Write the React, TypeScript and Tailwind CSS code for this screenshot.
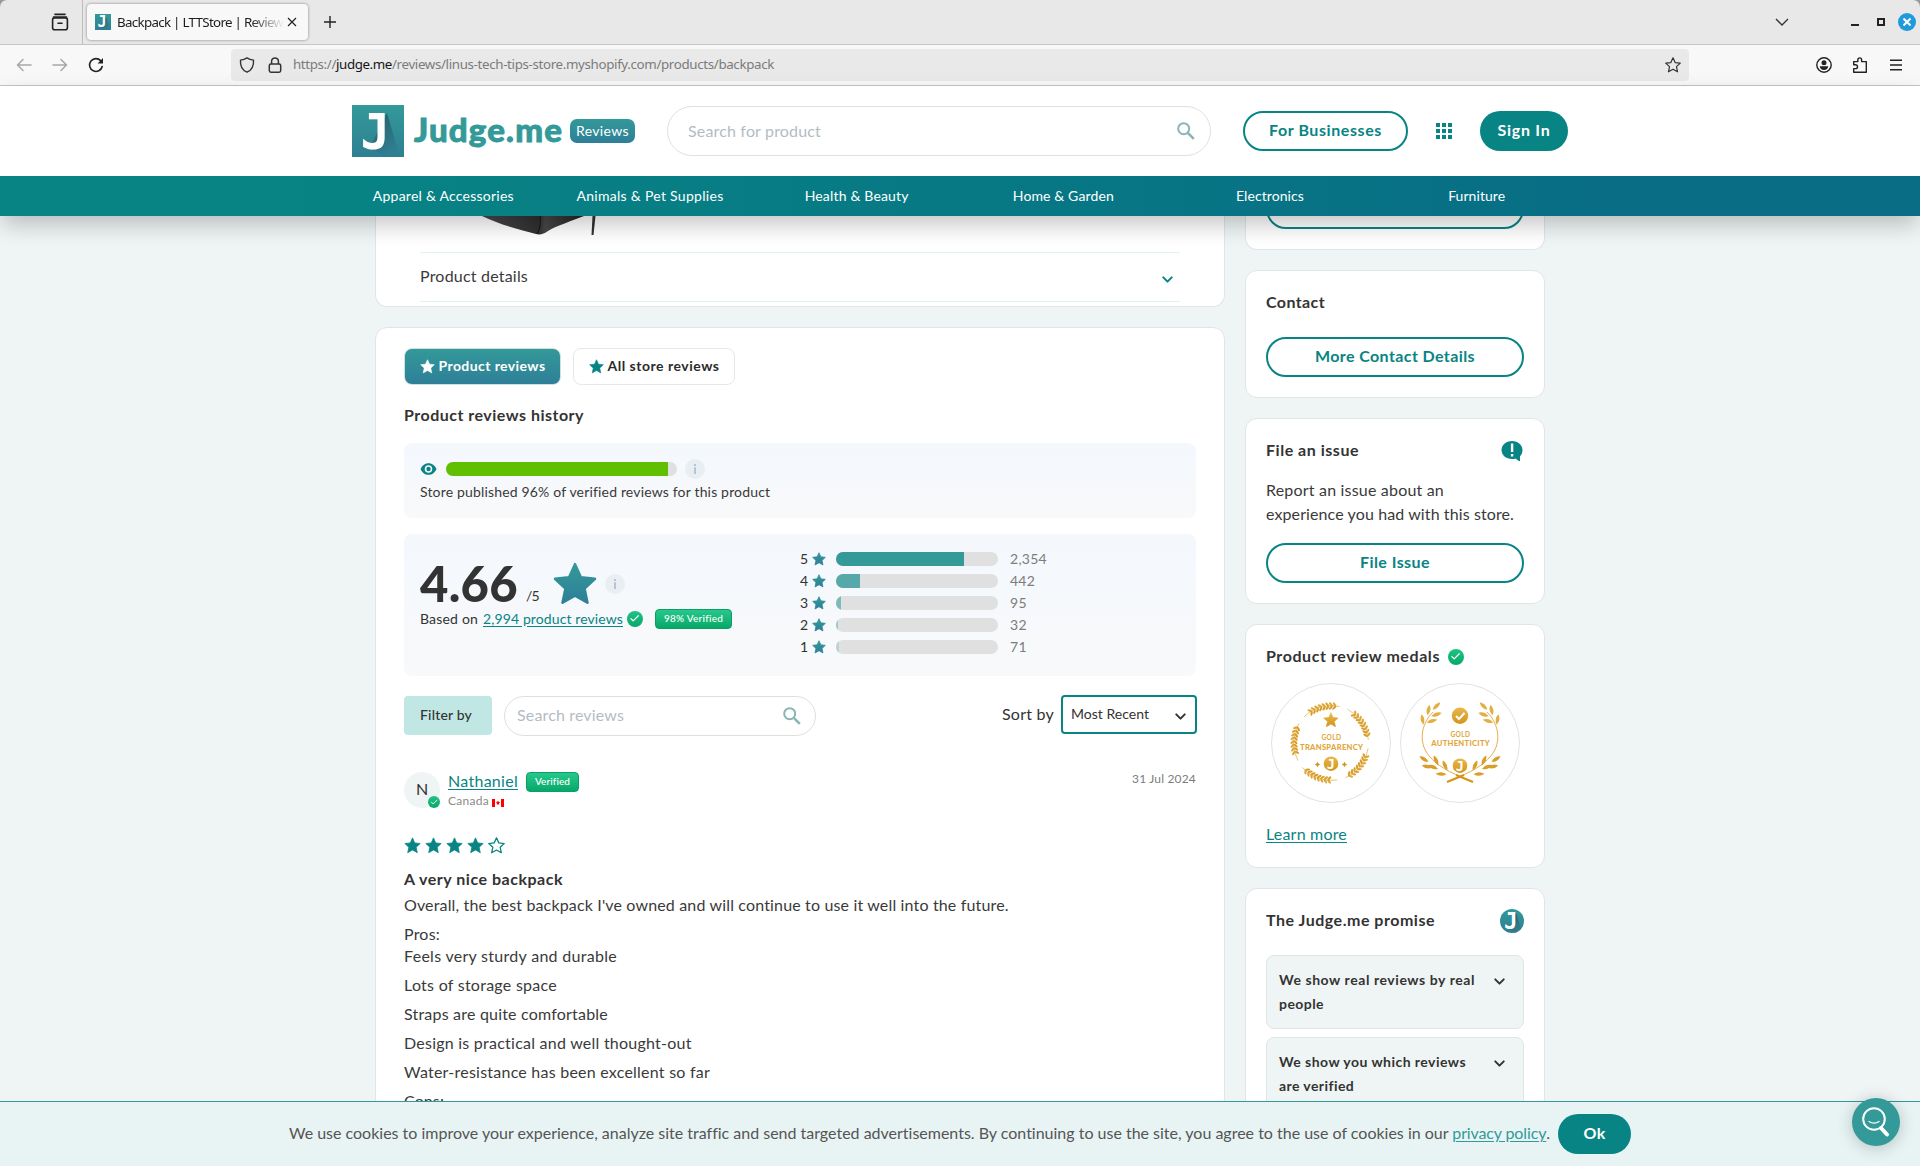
import React, { useLayoutEffect, useRef, useState } from "react";
import { ChevronDown, Check } from "lucide-react";

/* Text whose tracking is computed so that the run occupies `w` pixels. */
function Fit({ w, children, className = "" }: { w: number; children: string; className?: string }) {
  const ref = useRef<HTMLSpanElement>(null);
  const [tracking, setTracking] = useState(0);
  useLayoutEffect(() => {
    const el = ref.current;
    if (!el) return;
    const prev = el.style.letterSpacing;
    el.style.letterSpacing = "0px";
    const natural = el.getBoundingClientRect().width;
    el.style.letterSpacing = prev;
    setTracking((w - natural) / children.length);
  }, [w, children]);
  return (
    <span ref={ref} className={"inline-block -translate-y-px whitespace-pre " + className} style={{ letterSpacing: tracking + "px" }}>
      {children}
    </span>
  );
}

const STAR = "M12 1.2l3.2 7.1 7.7.9-5.7 5.3 1.6 7.7L12 18.3l-6.8 3.9 1.6-7.7L1.1 9.2l7.7-.9z";

function Star({ className, outline }: { className: string; outline?: boolean }) {
  return (
    <svg viewBox="0 0 24 24" className={className}>
      <path d={STAR} fill={outline ? "none" : "currentColor"} stroke="currentColor" strokeWidth={outline ? 1.8 : 1} strokeLinejoin="round" />
    </svg>
  );
}

function GradStar({ className }: { className: string }) {
  return (
    <svg viewBox="0 0 24 24" className={className}>
      <defs>
        <linearGradient id="gs" x1="0" y1="0" x2="0" y2="1">
          <stop offset="0" stopColor="#339999" />
          <stop offset="1" stopColor="#2e7f98" />
        </linearGradient>
      </defs>
      <path d={STAR} fill="url(#gs)" stroke="url(#gs)" strokeWidth="1.4" strokeLinejoin="round" />
    </svg>
  );
}

function JLogo({ className, round }: { className: string; round?: boolean }) {
  return (
    <svg viewBox="0 0 52 52" className={className}>
      <defs>
        <linearGradient id="jl" x1="0" y1="0" x2="0" y2="1">
          <stop offset="0" stopColor="#339999" />
          <stop offset="1" stopColor="#2e7f93" />
        </linearGradient>
        <linearGradient id="js" x1="0" y1="0" x2="0.5" y2="1">
          <stop offset="0.1" stopColor="#2c5f66" />
          <stop offset="1" stopColor="#2e7f93" />
        </linearGradient>
        <clipPath id="jc">
          <circle cx="26" cy="26" r="26" />
        </clipPath>
      </defs>
      <g clipPath={round ? "url(#jc)" : undefined}>
        <rect width="52" height="52" fill="url(#jl)" />
        <path d="M35 8 L48 52 H32 L18 42 Z" fill="url(#js)" />
        <text x="8.500" y="43.500" fontFamily="DejaVu Sans Mono" fontWeight="700" fontSize="49" fill="#fff">J</text>
      </g>
    </svg>
  );
}

function CheckDisc({ className }: { className: string }) {
  return (
    <span className={"flex shrink-0 items-center justify-center rounded-full bg-linear-to-b from-[#1fc286] to-[#07a86b] text-white " + className}>
      <Check className="size-[70%]" strokeWidth={2.6} />
    </span>
  );
}

function Info() {
  return (
    <span className="flex size-5 items-center justify-center rounded-full bg-[#e9eef3]">
      <svg viewBox="0 0 20 20" className="size-5">
        <path d="M9 5h2v1.9H9zM9 8.2h2V15H9z" fill="#b5c5d6" />
      </svg>
    </span>
  );
}

function Search({ className }: { className: string }) {
  return (
    <svg viewBox="0 0 18 18" className={className} fill="none" stroke="#8bb5b5">
      <circle cx="6.7" cy="6.7" r="5.5" strokeWidth="2" />
      <path d="M10.8 10.8l6 6" strokeWidth="2.6" />
    </svg>
  );
}

function Badge({ w, tw, children }: { w: string; tw: number; children: string }) {
  return (
    <span className={"flex h-5 items-center justify-center rounded border border-[#0a9f66] bg-linear-to-b from-[#25c88b] to-[#05a869] text-[10px] font-medium leading-none text-white " + w}>
      <Fit w={tw}>{children}</Fit>
    </span>
  );
}

/* ---------------- Browser chrome ---------------- */

function Chrome() {
  return (
    <div className="shrink-0 bg-[#9a9a9a] font-['Noto_Sans'] text-[13.33px] text-[#1c1c1e]">
      <div className="flex h-[45px] items-center rounded-t-[7px] border-b border-[#c4c4c4] bg-[#e8e8e8]">
        <div className="flex h-full w-[83px] shrink-0 items-center border-r border-[#bcbcbc] pl-[51px]">
          <svg viewBox="0 0 18 18" className="size-[18px]" fill="none" stroke="#222" strokeWidth="1.6" strokeLinecap="round">
            <path d="M4 1.4h10M7 10.2h4" />
            <path d="M2.5 4h13" />
            <rect x="1.6" y="4.9" width="14.8" height="11.8" rx="2" />
          </svg>
        </div>
        <div className="ml-1 flex h-[36px] w-[221px] shrink-0 items-center rounded bg-[#f8f8f8] pl-2 shadow-[0_0_3px_rgba(0,0,0,0.45)]">
          <JLogo className="size-4 shrink-0" />
          <div className="ml-1.5 w-[167px] overflow-hidden whitespace-nowrap [mask-image:linear-gradient(to_right,black_80%,transparent)]">
            <Fit w={172} className="translate-y-px">Backpack | LTTStore | Reviews</Fit>
          </div>
          <svg viewBox="0 0 10 10" className="ml-[3px] size-[10px]" stroke="#222" strokeWidth="1.2">
            <path d="M1 1l8 8M9 1L1 9" />
          </svg>
        </div>
        <svg viewBox="0 0 12 12" className="ml-4 size-3" stroke="#222" strokeWidth="1.4">
          <path d="M6 0v12M0 6h12" />
        </svg>
        <div className="flex-1" />
        <svg viewBox="0 0 14 8" className="mr-[62px] h-2 w-[14px]" fill="none" stroke="#333" strokeWidth="1.4">
          <path d="M1 1l6 6 6-6" />
        </svg>
        <div className="mt-1.5 h-[2px] w-2 bg-[#222]" />
        <div className="ml-[18px] size-2 border-2 border-[#222]" />
        <div className="ml-[13px] mr-1 flex size-[18px] items-center justify-center rounded-full bg-[#1f9bdc]">
          <svg viewBox="0 0 8 8" className="size-2" stroke="#fff" strokeWidth="2">
            <path d="M0.5 0.5l7 7M7.5 0.5l-7 7" />
          </svg>
        </div>
      </div>
      <div className="flex h-[41px] items-center border-b border-[#c4c4c4] bg-[#f8f8f8]">
        <svg viewBox="0 0 16 14" className="ml-4 h-[14px] w-4" fill="none" stroke="#a6a6a6" strokeWidth="1.5" strokeLinecap="round" strokeLinejoin="round">
          <path d="M15 7H1.5M7 1.5L1.5 7 7 12.5" />
        </svg>
        <svg viewBox="0 0 16 14" className="ml-5 h-[14px] w-4" fill="none" stroke="#a6a6a6" strokeWidth="1.5" strokeLinecap="round" strokeLinejoin="round">
          <path d="M1 7h13.5M9 1.5L14.5 7 9 12.5" />
        </svg>
        <svg viewBox="0 0 16 16" className="ml-5 size-4" fill="none" stroke="#222" strokeWidth="1.6" strokeLinecap="round">
          <path d="M14.2 9.5A6.4 6.4 0 1 1 12.6 3.6" />
          <path d="M15 1v5.4H9.6z" fill="#222" stroke="none" />
        </svg>
        <div className="ml-[127px] flex h-8 w-[1458px] items-center rounded bg-[#e9e9e9]">
          <svg viewBox="0 0 16 16" className="ml-2 size-4" fill="none" stroke="#333" strokeWidth="1.4" strokeLinejoin="round">
            <path d="M8 .9C6 2.3 3.8 2.9 1.5 3.1 1 9.500 4 13.500 8 15.200c4-1.700 7-5.700 6.500-12.100C12.200 2.900 10 2.300 8 .9z" />
          </svg>
          <svg viewBox="0 0 14 16" className="ml-[13px] h-4 w-[14px]" fill="none" stroke="#333" strokeWidth="1.5">
            <rect x="1.300" y="7" width="11.400" height="8.200" rx="1.600" />
            <path d="M3.600 7V4.300a3.400 3.400 0 0 1 6.800 0V7" />
          </svg>
          <div className="ml-[11px] flex translate-y-px text-[#7b7b7b]">
            <Fit w={43}>https://</Fit>
            <Fit w={56} className="text-[#15141a]">judge.me</Fit>
            <Fit w={382}>/reviews/linus-tech-tips-store.myshopify.com/products/backpack</Fit>
          </div>
          <div className="flex-1" />
          <Star className="mr-2 size-4 text-[#333]" outline />
        </div>
        <div className="flex-1" />
        <svg viewBox="0 0 16 16" className="size-4" fill="#222">
          <circle cx="8" cy="8" r="7.2" fill="none" stroke="#222" strokeWidth="1.4" />
          <circle cx="8" cy="5.700" r="2.500" />
          <path d="M3.800 9.300h8.400c0 2.300-1.900 3.700-4.200 3.700s-4.200-1.400-4.200-3.700z" />
        </svg>
        <svg viewBox="0 0 16 16" className="ml-5 size-4" fill="none" stroke="#222" strokeWidth="1.4" strokeLinejoin="round">
          <path d="M1.700 15.200v-3.600h1.900a1.900 1.900 0 0 0 0-3.800H1.700V4.600h4.100V2.800a1.900 1.900 0 0 1 3.800 0v1.800h4.700v10.600z" />
        </svg>
        <svg viewBox="0 0 14 12" className="ml-[21px] mr-[17px] h-3 w-[14px]" stroke="#222" strokeWidth="1.400">
          <path d="M1 1.200h12M1 6h12M1 10.800h12" />
        </svg>
      </div>
    </div>
  );
}

/* ---------------- Site header ---------------- */

const NAV: [string, number][] = [
  ["Apparel & Accessories", 141],
  ["Animals & Pet Supplies", 147],
  ["Health & Beauty", 104],
  ["Home & Garden", 101],
  ["Electronics", 68],
  ["Furniture", 57],
];

function Header() {
  return (
    <div className="relative z-10 shrink-0 shadow-[0_10px_22px_-2px_rgba(0,0,0,0.24)]">
      <div className="flex h-[90px] items-center bg-white pl-[352px]">
        <JLogo className="size-[52px]" />
        <div className="ml-[10px] w-[148px] pb-0.5 text-[33px] font-black leading-none text-[#339999] [-webkit-text-stroke:0.9px_#339999]">
          <Fit w={149}>Judge.me</Fit>
        </div>
        <div className="ml-[8px] flex h-6 w-[65px] items-center justify-center rounded-[7px] bg-linear-to-b from-[#339999] to-[#2e7f98] text-[14px] text-white">
          <Fit w={53}>Reviews</Fit>
        </div>
        <div className="ml-8 flex h-[50px] w-[544px] items-center justify-between rounded-full border border-[#e0e0e0] pl-5 pr-[15px] text-[16px] text-[#b3bcc4]">
          <Fit w={133} className="translate-y-0">Search for product</Fit>
          <Search className="size-[18px]" />
        </div>
        <button className="ml-8 h-10 w-[165px] rounded-full border-2 border-[#088484] text-[16px] font-bold text-[#088484]">
          <Fit w={113}>For Businesses</Fit>
        </button>
        <div className="ml-7 grid grid-cols-3 gap-0.5">
          {[0, 1, 2, 3, 4, 5, 6, 7, 8].map((i) => (
            <span key={i} className="size-1 bg-[#088484]" />
          ))}
        </div>
        <button className="ml-7 h-10 w-[88px] rounded-full bg-[#088484] text-[16px] font-bold text-white">
          <Fit w={53}>Sign In</Fit>
        </button>
      </div>
      <div className="h-10 bg-linear-to-r from-[#088484] from-15% to-[#086d85] to-85%">
        <div className="ml-[340px] grid h-full w-[1240px] grid-cols-6 items-center justify-items-center text-[14px] text-white">
          {NAV.map(([t, w]) => (
            <Fit key={t} w={w}>{t}</Fit>
          ))}
        </div>
      </div>
    </div>
  );
}

/* ---------------- Main column ---------------- */

const RATINGS = [
  { n: "5", count: "2,354", w: 128, cw: 37, color: "bg-[#339999]" },
  { n: "4", count: "442", w: 24, cw: 25, color: "bg-[#57a8a8]" },
  { n: "3", count: "95", w: 5, cw: 17, color: "bg-[#7dbaba]" },
  { n: "2", count: "32", w: 2, cw: 17, color: "bg-[#9fc8c8]" },
  { n: "1", count: "71", w: 3, cw: 17, color: "bg-[#bdd3d3]" },
];

const BODY: [string, number, string][] = [
  ["Overall, the best backpack I've owned and will continue to use it well into the future.", 605, "mb-[7px]"],
  ["Pros:", 36, ""],
  ["Feels very sturdy and durable", 213, "mb-[7px]"],
  ["Lots of storage space", 153, "mb-[7px]"],
  ["Straps are quite comfortable", 204, "mb-[7px]"],
  ["Design is practical and well thought-out", 288, "mb-[7px]"],
  ["Water-resistance has been excellent so far", 306, "mb-[7px]"],
  ["Cons:", 40, ""],
];

function ProductCard() {
  return (
    <div className="h-[91px] rounded-b-[12px] border border-t-0 border-[#e0e5e5] bg-white px-[44px]">
      <svg viewBox="0 0 760 36" className="block h-9 w-[760px]">
        <defs>
          <linearGradient id="bp" x1="0" y1="0" x2="1" y2="0">
            <stop offset="0" stopColor="#4a4a4a" />
            <stop offset="0.55" stopColor="#303030" />
            <stop offset="0.62" stopColor="#484848" />
            <stop offset="1" stopColor="#222" />
          </linearGradient>
        </defs>
        <path d="M62 0h102c-12 5-26 9-36 15-4 3-8 4-12 3C97 13 78 8 62 0z" fill="url(#bp)" />
        <path d="M120 0c1 7 0 13-3 18" stroke="#111" fill="none" />
        <path d="M172.500 0h3l-2 19h-2z" fill="#333" />
      </svg>
      <div className="flex h-[50px] items-center justify-between border-y border-[#e0f0ee] pr-1 text-[16px] text-[#3a3a3a]">
        <Fit w={108}>Product details</Fit>
        <ChevronDown className="mt-1 size-[17px] text-[#088484]" strokeWidth={2.8} />
      </div>
    </div>
  );
}

function ReviewsCard() {
  return (
    <div className="mt-5 h-[1000px] rounded-[12px] border border-[#e0e5e5] bg-white px-7 pt-5">
      <div className="flex h-[37px] gap-[12px] text-[14px] font-bold">
        <div className="flex w-[157px] items-center justify-center gap-1 rounded-lg border border-[#cfe0e2] bg-linear-to-b from-[#339999] to-[#2e7f98] text-white">
          <Star className="size-[15px]" />
          <Fit w={107}>Product reviews</Fit>
        </div>
        <div className="flex w-[162px] items-center justify-center gap-1 rounded-lg border border-[#e4e8e8] text-[#2b2b2b]">
          <Star className="size-[15px] text-[#088484]" />
          <Fit w={112}>All store reviews</Fit>
        </div>
      </div>
      <div className="mt-[18px] h-6 text-[16px] font-bold leading-6">
        <Fit w={180} className="translate-y-0">Product reviews history</Fit>
      </div>

      <div className="mt-4 h-[75px] rounded-lg bg-linear-to-b from-[#f4f8fd] to-[#f8f9fa] px-4 pt-4">
        <div className="flex h-5 items-center">
          <svg viewBox="0 0 18 14" className="h-[14px] w-[17px]">
            <path d="M9 .8C5 .8 2 3.400.6 7 2 10.600 5 13.200 9 13.200s7-2.600 8.400-6.200C16 3.400 13 .8 9 .8z" fill="#088484" />
            <circle cx="9" cy="7" r="4" fill="#f5f8fc" />
            <circle cx="9" cy="7" r="2.300" fill="#088484" />
          </svg>
          <div className="ml-[9px] mr-2 h-[14px] w-[231px] overflow-hidden rounded-full bg-[#e0e0e0]">
            <div className="h-full w-[222px] bg-[#5fbf00]" />
          </div>
          <Info />
        </div>
        <div className="mt-[3px] text-[14px] leading-5 text-[#3a3a3a]">
          <Fit w={350} className="translate-y-0">Store published 96% of verified reviews for this product</Fit>
        </div>
      </div>

      <div className="mt-4 flex h-[142px] rounded-lg bg-linear-to-b from-[#f4f8fd] to-[#f8f9fa] pl-4">
        <div className="w-[380px] pt-[25px] text-[14px]">
          <div className="flex h-[50px] items-center">
            <Fit w={98} className="text-[49px] font-black leading-none text-[#333]">4.66</Fit>
            <Fit w={13} className="ml-2 mt-6">/5</Fit>
            <GradStar className="ml-3.5 size-[44px]" />
            <span className="ml-2">
              <Info />
            </span>
          </div>
          <div className="flex h-5 items-center">
            <Fit w={58}>Based on</Fit>
            <Fit w={140} className="ml-[5px] text-[#088484] underline underline-offset-2">2,994 product reviews</Fit>
            <CheckDisc className="ml-1 mr-3 size-4" />
            <Badge w="w-[77px]" tw={59}>98% Verified</Badge>
          </div>
        </div>
        <div className="flex flex-col gap-2 pt-[18px] text-[14px] leading-none">
          {RATINGS.map((r) => (
            <div key={r.n} className="flex h-[14px] items-center">
              <span className="w-2">{r.n}</span>
              <GradStar className="ml-1 size-[14px]" />
              <div className="ml-[10px] mr-3 h-[14px] w-[162px] overflow-hidden rounded-full bg-[#e0e0e0]">
                <div className={"h-full " + r.color} style={{ width: r.w }} />
              </div>
              <Fit w={r.cw} className="translate-y-0 text-[#7d7d7d]">{r.count}</Fit>
            </div>
          ))}
        </div>
      </div>

      <div className="mt-5 flex h-10 items-start">
        <div className="flex h-[39px] w-[88px] items-center justify-center rounded bg-[#c0e7e4] pr-1 text-[14px] font-medium">
          <Fit w={52}>Filter by</Fit>
        </div>
        <div className="ml-3 flex h-10 w-[312px] items-center justify-between rounded-full border border-[#e0e0e0] pl-3 pr-[14px] text-[16px] text-[#b3bcc4]">
          <Fit w={107}>Search reviews</Fit>
          <Search className="size-[18px]" />
        </div>
        <div className="flex-1" />
        <div className="-mr-px -mt-px flex h-[39px] items-center text-[16px]">
          <Fit w={52}>Sort by</Fit>
          <div className="ml-[7px] flex h-[39px] w-[136px] items-center justify-between rounded border-2 border-[#088484] pl-2 pr-1.5 text-[14px]">
            <Fit w={78}>Most Recent</Fit>
            <ChevronDown className="mt-1 size-[17px]" strokeWidth={2.8} />
          </div>
        </div>
      </div>

      <div className="mt-9 flex h-9">
        <div className="relative flex size-9 items-center justify-center rounded-full bg-[#eff5f5] text-[16px] leading-none">
          <span className="-translate-y-px">N</span>
          <CheckDisc className="absolute bottom-0 right-0 size-3" />
        </div>
        <div className="ml-2">
          <div className="flex h-5 items-center text-[16px]">
            <Fit w={70} className="-translate-y-0.5 text-[#088484] underline underline-offset-2">Nathaniel</Fit>
            <span className="ml-2">
              <Badge w="w-[53px]" tw={35}>Verified</Badge>
            </span>
          </div>
          <div className="flex h-5 items-center text-[12px] text-[#8a8a8a]">
            <Fit w={41}>Canada</Fit>
            <svg viewBox="0 0 12 8" className="ml-[3px] mt-0.5 h-2 w-3">
              <path fill="#fff" d="M0 0h12v8H0z" />
              <path fill="#f00" d="M0 0h3v8H0zM9 0h3v8H9zM6 1.500l.7 1.300 1.300.4-1 1.400.2.800H4.800l.2-.8-1-1.400 1.300-.4z" />
            </svg>
          </div>
        </div>
        <div className="flex-1" />
        <div className="pt-px text-[12px] leading-[14px] text-[#7d7d7d]">
          <Fit w={64}>31 Jul 2024</Fit>
        </div>
      </div>

      <div className="mt-[29px] flex gap-1 text-[#088484]">
        {[0, 1, 2, 3, 4].map((i) => (
          <Star key={i} className="size-[17px]" outline={i === 4} />
        ))}
      </div>
      <div className="mt-[14px] h-6 text-[16px] font-bold leading-6">
        <Fit w={159}>A very nice backpack</Fit>
      </div>
      <div className="mt-[3px] flex flex-col items-start text-[16px] leading-[22px] text-[#3a3a3a]">
        {BODY.map(([t, w, m]) => (
          <Fit key={t} w={w} className={m}>{t}</Fit>
        ))}
      </div>
    </div>
  );
}

/* ---------------- Sidebar ---------------- */

const GOLD = "url(#gold)";

function GoldDefs() {
  return (
    <defs>
      <linearGradient id="gold" x1="0" y1="0" x2="0" y2="1">
        <stop offset="0" stopColor="#e8b84e" />
        <stop offset="1" stopColor="#d4941a" />
      </linearGradient>
    </defs>
  );
}

function MedalText({ label, w, y }: { label: string; w: number; y: number }) {
  return (
    <g fill="#dfa63a" fontFamily="Lato">
      <text x={50.5} y={y} fontSize="6.600" textLength={19.5} fontWeight="700">GOLD</text>
      <text x={60.5 - w / 2} y={y + 9.5} fontSize="7.600" textLength={w} fontWeight="900">{label}</text>
    </g>
  );
}

function GoldJ({ y }: { y: number }) {
  return (
    <g>
      <circle cx="60" cy={y} r="7.300" fill={GOLD} />
      <text x="55.800" y={y + 4.9} fontFamily="DejaVu Sans Mono" fontWeight="700" fontSize="13.500" fill="#fff">J</text>
    </g>
  );
}

function TransparencyMedal() {
  const leaves = [0, 1, 2, 3, 4, 5, 6, 7];
  return (
    <svg viewBox="0 0 120 120" className="size-[120px]">
      <GoldDefs />
      <circle cx="60" cy="60" r="59.500" fill="#fff" stroke="#e2e2e2" />
      {[0, 72, 144, 216, 288].map((a) => (
        <g key={a} transform={`rotate(${a} 60 60)`}>
          <path d="M76.500 26.300A37.500 37.500 0 0 1 97.400 57" fill="none" stroke="#dfa63a" strokeWidth="0.600" />
          {leaves.map((i) => (
            <g key={i} transform={`rotate(${-50 + i * 5.5} 60 60) translate(97 60)`}>
              <ellipse cx="1.700" cy="0.500" rx="2.500" ry="1.150" transform="rotate(-42)" fill="#dfa63a" />
              <ellipse cx="-1.700" cy="0.500" rx="2.500" ry="1.150" transform="rotate(42)" fill="#d99e2a" />
            </g>
          ))}
        </g>
      ))}
      <g transform="translate(52 29) scale(0.660)">
        <path d={STAR} fill={GOLD} stroke={GOLD} strokeLinejoin="round" />
      </g>
      <MedalText label="TRANSPARENCY" w={63} y={57} />
      <GoldJ y={80.7} />
      {[46.5, 73.5].map((x) => (
        <path key={x} transform={`translate(${x} 81.500)`} d="M0-2.800L.9-.9 2.800 0 .9.900 0 2.800-.9.900-2.800 0-.9-.9z" fill="#d4941a" />
      ))}
    </svg>
  );
}

const BRANCH_LEAVES = [
  [36.5, 23, -45], [28.5, 27, -78], [36.5, 31.5, -20], [22.5, 36.5, 80], [32, 38, -15],
  [24, 76, 32], [36, 77.5, 65], [27, 83.5, 12], [45, 82.5, 65], [33, 84, 22], [41, 91, 3],
];

function Branch() {
  return (
    <g>
      <path d="M33 29C20 42 18 62 31 75c8 9 20 15 42 24" fill="none" stroke="#dfa63a" strokeWidth="0.900" />
      <path d="M56 92l17 7" stroke="#d4941a" strokeWidth="2" />
      {BRANCH_LEAVES.map(([x, y, r], i) => (
        <path key={i} transform={`translate(${x} ${y}) rotate(${r})`} d="M-5.400 0Q0-3.700 5.400 0 0 3.700-5.400 0z" fill={y < 50 ? "#e3ae44" : "#d99e2a"} />
      ))}
    </g>
  );
}

function AuthenticityMedal() {
  return (
    <svg viewBox="0 0 120 120" className="size-[120px]">
      <circle cx="60" cy="60" r="59.500" fill="#fff" stroke="#e2e2e2" />
      <Branch />
      <g transform="translate(120 0) scale(-1 1)">
        <Branch />
      </g>
      <circle cx="60" cy="32.700" r="8.200" fill={GOLD} />
      <path d="M56 33l3 3 5.500-6" fill="none" stroke="#fff" strokeWidth="2" />
      <MedalText label="AUTHENTICITY" w={58.5} y={53.7} />
      <GoldJ y={82.7} />
    </svg>
  );
}

function SideCard({ className, children }: { className: string; children: React.ReactNode }) {
  return <div className={"w-[300px] shrink-0 border border-[#e0e5e5] bg-white px-5 " + className}>{children}</div>;
}

function Outline({ className = "", children }: { className?: string; children?: React.ReactNode }) {
  return (
    <button className={"block h-10 w-[258px] shrink-0 rounded-full border-2 border-[#088484] text-[16px] font-bold text-[#088484] " + className}>
      {children}
    </button>
  );
}

function PromiseItem({ lines }: { lines: [string, number][] }) {
  return (
    <div className="mb-2 flex h-[74px] w-[258px] justify-between rounded-lg border border-[#e0e5e5] bg-[#eff5f5] pl-3 pr-[15px] pt-[12px] text-[14px] font-bold leading-6">
      <div>
        {lines.map(([t, w]) => (
          <div key={t} className="h-6">
            <Fit w={w} className="translate-y-0">{t}</Fit>
          </div>
        ))}
      </div>
      <ChevronDown className="mt-[5px] size-[17px]" strokeWidth={2.8} />
    </div>
  );
}

function Sidebar() {
  return (
    <div className="flex w-[300px] flex-col">
      <SideCard className="h-[34px] rounded-b-[12px] border-t-0">
        <Outline className="-mt-[27px]" />
      </SideCard>
      <SideCard className="mt-5 h-[128px] rounded-[12px] pt-5">
        <div className="h-6 text-[16px] font-bold leading-6">
          <Fit w={59}>Contact</Fit>
        </div>
        <Outline className="mt-[22px]">
          <Fit w={160}>More Contact Details</Fit>
        </Outline>
      </SideCard>
      <SideCard className="mt-5 h-[186px] rounded-[12px] pt-5">
        <div className="flex h-6 items-center justify-between text-[16px] font-bold">
          <Fit w={93}>File an issue</Fit>
          <svg viewBox="0 0 22 22" className="mr-px size-[22px]">
            <path d="M11 1C5 1 .5 5 .5 10S5 19 11 19c1.300 0 2.600-.2 3.700-.6.9 1 2.300 2 4.300 2.800v-5c1.600-1.600 2.500-3.800 2.500-6.200C21.500 5 17 1 11 1z" fill="#088484" />
            <path d="M9.900 3.500h2.400v8.500H9.900zM9.900 14h2.400v2.400H9.900z" fill="#fff" />
          </svg>
        </div>
        <div className="mt-4 text-[16px] leading-6 text-[#3a3a3a]">
          <Fit w={178}>Report an issue about an</Fit>
          <Fit w={248}>experience you had with this store.</Fit>
        </div>
        <Outline className="mt-4">
          <Fit w={70}>File Issue</Fit>
        </Outline>
      </SideCard>
      <SideCard className="mt-5 h-[244px] rounded-[12px] pt-5">
        <div className="flex h-6 items-center text-[16px] font-bold">
          <Fit w={174}>Product review medals</Fit>
          <CheckDisc className="ml-2 size-4" />
        </div>
        <div className="ml-[5px] mt-[14px] flex gap-[9px]">
          <TransparencyMedal />
          <AuthenticityMedal />
        </div>
        <div className="mt-5 text-[16px] leading-6 text-[#088484]">
          <Fit w={81} className="underline underline-offset-2">Learn more</Fit>
        </div>
      </SideCard>
      <SideCard className="mt-5 h-[400px] rounded-[12px] pt-5">
        <div className="mb-[22px] flex h-6 items-center justify-between text-[16px] font-bold">
          <Fit w={169}>The Judge.me promise</Fit>
          <JLogo className="size-6" round />
        </div>
        <PromiseItem lines={[["We show real reviews by real", 196], ["people", 45]]} />
        <PromiseItem lines={[["We show you which reviews", 187], ["are verified", 75]]} />
      </SideCard>
    </div>
  );
}

/* ---------------- Footer overlays ---------------- */

function CookieBar() {
  return (
    <div className="relative z-10 flex h-[65px] shrink-0 items-center border-t border-[#339999] bg-[#e8f4f4] pl-[289px] text-[16px] text-[#555]">
      <Fit w={1163}>We use cookies to improve your experience, analyze site traffic and send targeted advertisements. By continuing to use the site, you agree to the use of cookies in our </Fit>
      <Fit w={94} className="text-[#339999] underline underline-offset-2">privacy policy</Fit>
      <span className="-translate-y-px">.</span>
      <button className="ml-2 h-10 w-[73px] rounded-full bg-[#088484] font-bold text-white">
        <Fit w={22}>Ok</Fit>
      </button>
      <div className="absolute left-[1852px] top-[-4px] flex size-12 items-center justify-center rounded-full bg-[#339999] shadow-[0_2px_16px_rgba(0,0,0,0.22)]">
        <svg viewBox="0 0 48 48" className="size-12" fill="none" stroke="#fff" strokeLinecap="round">
          <circle cx="22" cy="21" r="10.800" strokeWidth="2" />
          <path d="M17 23.500q5 3.400 10 0" strokeWidth="1.300" />
          <path d="M29 30l6 6.500" strokeWidth="4" />
        </svg>
      </div>
    </div>
  );
}

export default function App() {
  return (
    <div className="relative flex h-[1166px] w-[1920px] flex-col overflow-hidden bg-[#eff5f5] font-['Lato',sans-serif] text-[#333]">
      <Chrome />
      <Header />
      <div className="flex min-h-0 flex-1 gap-5 overflow-hidden pl-[375px]">
        <div className="w-[850px] shrink-0">
          <ProductCard />
          <ReviewsCard />
        </div>
        <Sidebar />
      </div>
      <CookieBar />
    </div>
  );
}
